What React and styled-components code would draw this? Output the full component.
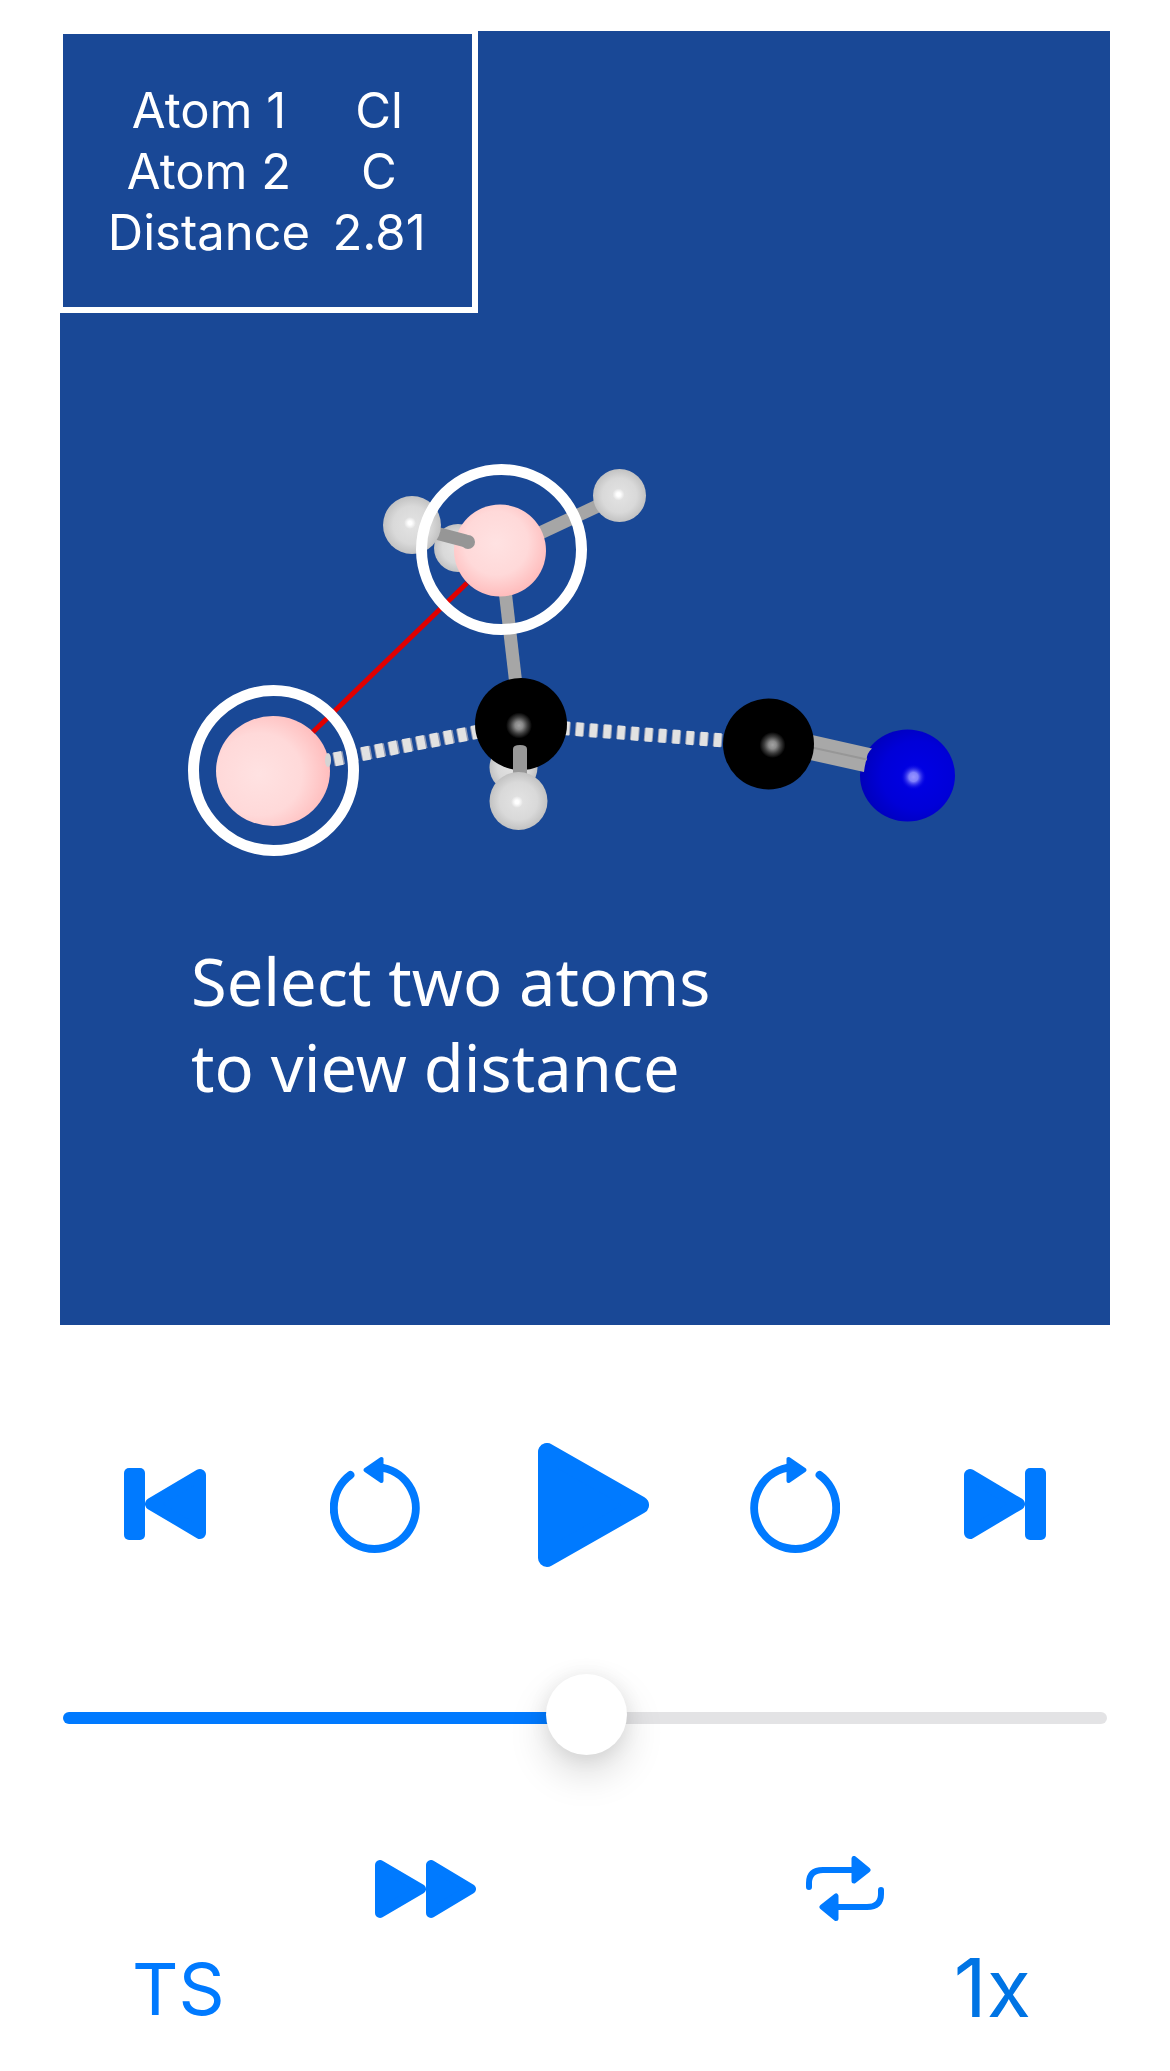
import React, { useState } from "react";
import styled, { createGlobalStyle } from "styled-components";

const GlobalStyle = createGlobalStyle`
  * { box-sizing: border-box; }
  body { margin: 0; background: #fff; font-family: Inter, Roboto, "Liberation Sans", sans-serif; }
`;

const Page = styled.main`
  padding: 31px 60px 24px;
`;

const Viewer = styled.section`
  display: flex;
  flex-direction: column;
  align-items: flex-start;
  background: #194896;
  color: #fff;
  padding-bottom: 215px;
`;

const Readout = styled.div`
  width: 418px;
  height: 282px;
  padding: 46px 0 0 36px;
  border: solid #fff;
  border-width: 3px 6px 6px 3px;
`;

const ReadoutTable = styled.table`
  border-collapse: collapse;
  font-size: 49px;
  line-height: 61px;
  text-align: center;
`;

const Name = styled.th`
  width: 220px;
  padding: 0;
  font-weight: 400;
`;

const Value = styled.td`
  width: 120px;
  padding: 0;
`;

const Scene = styled.svg`
  display: block;
  width: 100%;
  height: auto;
`;

const Caption = styled.p`
  margin: 0;
  padding-left: 131px;
  font-family: "Noto Sans", "Open Sans", sans-serif;
  font-size: 65px;
  line-height: 86px;
`;

const Transport = styled.div`
  display: grid;
  grid-template-columns: repeat(5, 1fr);
  align-items: center;
  justify-items: center;
  height: 124px;
  margin-top: 118px;
`;

const IconButton = styled.button`
  display: flex;
  padding: 0;
  border: 0;
  background: none;
  color: #007aff;
  cursor: pointer;
`;

const Icon = styled.svg`
  display: block;
  width: ${(p) => p.$w}px;
  height: ${(p) => p.$h}px;
  fill: currentColor;
  stroke: currentColor;
  stroke-linejoin: round;
  stroke-linecap: round;
`;

const SliderRow = styled.div`
  padding: 107px 3px 101px;
`;

const Slider = styled.input`
  display: block;
  width: 100%;
  height: 81px;
  margin: 0;
  appearance: none;
  background: none;

  &::-webkit-slider-runnable-track {
    height: 12px;
    margin-top: 7px;
    border-radius: 6px;
    background: linear-gradient(to right, #007aff ${(p) => p.$fill}%, #e3e3e5 ${(p) => p.$fill}%);
  }

  &::-webkit-slider-thumb {
    appearance: none;
    width: 81px;
    height: 81px;
    margin-top: -38px;
    border-radius: 50%;
    background: #fff;
    box-shadow: 0 18px 39px rgba(0, 0, 0, 0.15), 0 2px 20px rgba(0, 0, 0, 0.08);
  }
`;

const Options = styled.div`
  display: flex;
  align-items: center;
  justify-content: space-between;
  height: 65px;
  padding: 0 226px 0 315px;
  margin-bottom: 17px;
`;

const Labels = styled.div`
  display: flex;
  align-items: center;
  justify-content: space-between;
  height: 100px;
  padding: 0 79px 0 72px;
`;

const TextButton = styled.button`
  padding: 0;
  border: 0;
  background: none;
  font: 400 ${(p) => p.$size}px Inter, sans-serif;
  color: ${(p) => p.$color};
  cursor: pointer;
`;

const Hydrogen = ({ x, y, r, hx = x - 1, hy = y - 1 }) => (
  <g>
    <circle cx={x} cy={y} r={r} fill="url(#hydrogen)" />
    <circle cx={hx} cy={hy} r="6" fill="url(#glint)" />
  </g>
);

const Carbon = ({ x, y, r, hx, hy }) => (
  <g>
    <circle cx={x} cy={y} r={r} fill="#000" />
    <circle cx={hx} cy={hy} r="13" fill="url(#softGlint)" />
  </g>
);

const Ring = ({ x, y }) => (
  <circle cx={x} cy={y} r="80" fill="none" stroke="#fff" strokeWidth="11" />
);

const Stick = ({ d, color = "#a6a6a6" }) => (
  <path d={d} stroke={color} strokeWidth="13" fill="none" />
);

function Molecule() {
  return (
    <Scene viewBox="60 313 1050 625" role="img" aria-label="Transition state molecule">
      <defs>
        <radialGradient id="hydrogen">
          <stop offset="0" stopColor="#e3e3e3" />
          <stop offset="0.65" stopColor="#d9d9d9" />
          <stop offset="1" stopColor="#c2c2c2" />
        </radialGradient>
        <radialGradient id="glint">
          <stop offset="0.3" stopColor="#fff" />
          <stop offset="1" stopColor="#fff" stopOpacity="0" />
        </radialGradient>
        <radialGradient id="softGlint">
          <stop offset="0" stopColor="#a2a2a2" />
          <stop offset="0.3" stopColor="#8a8a8a" />
          <stop offset="0.65" stopColor="#3c3c3c" />
          <stop offset="1" stopColor="#000" />
        </radialGradient>
        <radialGradient id="blueGlint">
          <stop offset="0" stopColor="#9a96ff" />
          <stop offset="0.35" stopColor="#8080fc" />
          <stop offset="1" stopColor="#0000e0" stopOpacity="0" />
        </radialGradient>
        <radialGradient id="selected" cx="0.38" cy="0.53" r="0.68">
          <stop offset="0" stopColor="#ffe2e2" />
          <stop offset="0.55" stopColor="#ffd9d9" />
          <stop offset="1" stopColor="#ffb6b6" />
        </radialGradient>
        <radialGradient id="selectedTop" cx="0.46" cy="0.42" r="0.63">
          <stop offset="0" stopColor="#ffe2e2" />
          <stop offset="0.55" stopColor="#ffd9d9" />
          <stop offset="1" stopColor="#ffb6b6" />
        </radialGradient>
        <radialGradient id="nitrogen" cx="0.6" cy="0.5" r="0.62">
          <stop offset="0" stopColor="#0000e6" />
          <stop offset="0.6" stopColor="#0000d8" />
          <stop offset="1" stopColor="#0000b8" />
        </radialGradient>
      </defs>

      <circle cx="458" cy="548" r="24" fill="url(#hydrogen)" />
      <Stick d="M538 534 L604 503" />
      <Stick d="M505 590 L516 685" />
      <Hydrogen x={619.5} y={495.5} r={26.5} />
      <circle cx="500" cy="550.5" r="46" fill="url(#selectedTop)" />
      <Stick d="M432 532 L466 541" color="#969696" />
      <circle cx="468" cy="542" r="7" fill="#969696" />
      <Hydrogen x={412} y={525} r={29} hx={410} hy={523} />

      <ellipse cx="273" cy="771" rx="57" ry="55" fill="url(#selected)" />
      <path d="M467 583 L313 732" stroke="#e00000" strokeWidth="5" />

      <ellipse cx="328" cy="760" rx="3" ry="7" fill="#d4d4d4" />
      <path d="M333.500 759.500 L482 731" stroke="#8e98b4" strokeWidth="13" strokeDasharray="10.500 3.500" />
      <path d="M333.500 759.500 L482 731" stroke="#e2e2e2" strokeWidth="14" strokeDasharray="8 6" strokeDashoffset="-1" />
      <path d="M561.400 728 L724 740.500" stroke="#9aa2b8" strokeWidth="13" strokeDasharray="9 4.840" />
      <path d="M561.400 728 L724 740.500" stroke="#e2e2e2" strokeWidth="14" strokeDasharray="7 6.840" strokeDashoffset="-1" />

      <circle cx="513.5" cy="767.5" r="24" fill="url(#hydrogen)" />
      <Carbon x={521} y={724} r={46} hx={519} hy={725.5} />
      <path d="M513 776 V749 Q513 745 520 745 Q527 745 527 749 V776 Z" fill="#989898" />
      <Hydrogen x={518.5} y={801} r={29} hx={517} hy={802} />

      <ellipse cx="907.5" cy="775.5" rx="47.5" ry="46" fill="url(#nitrogen)" />
      <circle cx="913.5" cy="777" r="13" fill="url(#blueGlint)" />
      <path d="M810 734.5 L872 748.5 Q867 753 866.500 759.500 Q865 764 864 772 L810 760 Z" fill="#a8a8a8" />
      <path d="M812 747.500 L867 759.500" stroke="#979797" strokeWidth="2" />
      <Carbon x={768.5} y={744} r={45.5} hx={772.5} hy={745} />

      <Ring x={501.5} y={549.5} />
      <Ring x={273.5} y={770.5} />
    </Scene>
  );
}

const SkipIcon = ({ forward }) => (
  <Icon $w={82} $h={74} viewBox="0 0 82 74">
    <g transform={forward ? "translate(82 0) scale(-1 1)" : undefined}>
      <rect x="0" y="0" width="21" height="72" rx="5" stroke="none" />
      <path d="M76 7 V65 L27 36 Z" strokeWidth="12" />
    </g>
  </Icon>
);

const StepIcon = ({ forward }) => (
  <Icon $w={90} $h={100} viewBox="0 0 90 100">
    <g transform={forward ? "translate(90 0) scale(-1 1)" : undefined}>
      <path d="M53 12.800 A41 41 0 1 1 20.400 20" fill="none" strokeWidth="8" />
      <path d="M51.500 4 V26 L35.500 15 Z" strokeWidth="4" />
    </g>
  </Icon>
);

const PlayIcon = () => (
  <Icon $w={128} $h={124} viewBox="0 0 128 124">
    <path d="M26 9 V115 L119 62 Z" strokeWidth="18" />
  </Icon>
);

const FastForwardIcon = () => (
  <Icon $w={101} $h={58} viewBox="0 0 101 58">
    <path d="M5 5 V53 L46 29 Z M56 5 V53 L96 29 Z" strokeWidth="10" />
  </Icon>
);

const RepeatIcon = () => (
  <Icon $w={78} $h={65} viewBox="0 0 78 65">
    <path d="M3 31 V27 Q3 14 17 14 H48 M75 34 V38 Q75 51 61 51 H30" fill="none" strokeWidth="6" />
    <path d="M48 2.500 V25 L62 14 Z M30 40 V62.500 L16 51 Z" strokeWidth="5" />
  </Icon>
);

export default function App() {
  const [position, setPosition] = useState(502);
  return (
    <>
      <GlobalStyle />
      <Page>
        <Viewer>
          <Readout>
            <ReadoutTable>
              <tbody>
                <tr><Name scope="row">Atom 1</Name><Value>Cl</Value></tr>
                <tr><Name scope="row">Atom 2</Name><Value>C</Value></tr>
                <tr><Name scope="row">Distance</Name><Value>2.81</Value></tr>
              </tbody>
            </ReadoutTable>
          </Readout>
          <Molecule />
          <Caption>Select two atoms<br />to view distance</Caption>
        </Viewer>

        <Transport>
          <IconButton aria-label="Skip to start"><SkipIcon /></IconButton>
          <IconButton aria-label="Step back"><StepIcon /></IconButton>
          <IconButton aria-label="Play"><PlayIcon /></IconButton>
          <IconButton aria-label="Step forward"><StepIcon forward /></IconButton>
          <IconButton aria-label="Skip to end"><SkipIcon forward /></IconButton>
        </Transport>

        <SliderRow>
          <Slider
            type="range"
            min="0"
            max="1000"
            aria-label="Reaction progress"
            value={position}
            $fill={position / 10}
            onChange={(e) => setPosition(Number(e.target.value))}
          />
        </SliderRow>

        <Options>
          <IconButton aria-label="Fast forward"><FastForwardIcon /></IconButton>
          <IconButton aria-label="Repeat"><RepeatIcon /></IconButton>
        </Options>
        <Labels>
          <TextButton $size={72} $color="#007aff">TS</TextButton>
          <TextButton $size={81} $color="#0074e4">1x</TextButton>
        </Labels>
      </Page>
    </>
  );
}
